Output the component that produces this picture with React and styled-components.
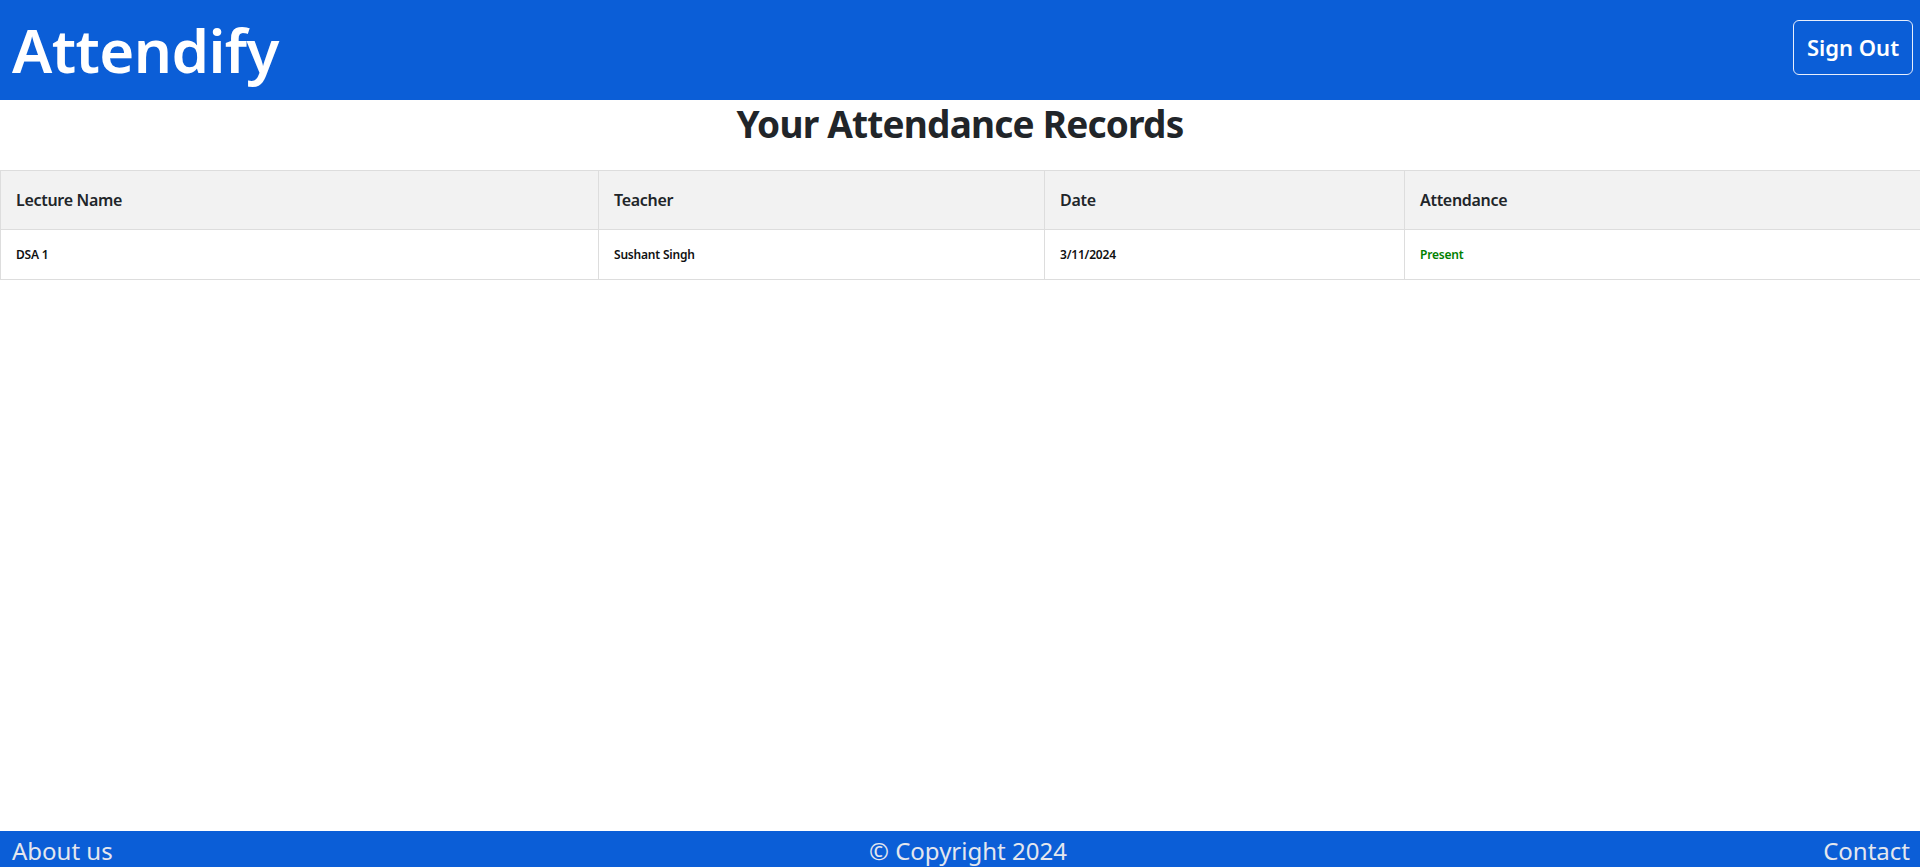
import React from "react";
import styled, { createGlobalStyle } from "styled-components";

const GlobalStyle = createGlobalStyle`
  * { box-sizing: border-box; }
  body {
    margin: 0;
    font-family: "Noto Sans", "Open Sans", sans-serif;
    color: #212529;
    background: #fff;
  }
`;

const Page = styled.div`
  min-height: 100vh;
  display: flex;
  flex-direction: column;
`;

const Header = styled.header`
  height: 100px;
  background: #0b5ed7;
  display: flex;
  align-items: center;
  justify-content: space-between;
  padding: 0 7px 6px 12px;
`;

const Brand = styled.h1`
  margin: 0;
  padding-top: 6px;
  color: #fff;
  font-size: 60px;
  font-weight: 600;
  letter-spacing: -0.6px;
`;

const SignOut = styled.button`
  width: 120px;
  height: 55px;
  background: transparent;
  border: 1px solid #e8eefc;
  border-radius: 6px;
  color: #fff;
  font-family: inherit;
  font-size: 22px;
  font-weight: 600;
  cursor: pointer;
`;

const Main = styled.main`
  flex: 1;
`;

const Heading = styled.h2`
  margin: 0;
  height: 70px;
  padding-top: 3px;
  line-height: 1.15;
  text-align: center;
  font-size: 37px;
  font-weight: 700;
  letter-spacing: -0.8px;
`;

const Table = styled.table`
  width: 100%;
  border-collapse: collapse;
  table-layout: fixed;
`;

const Th = styled.th`
  height: 59px;
  padding: 0 15px;
  background: #f2f2f2;
  border: 1px solid #ddd;
  text-align: left;
  font-size: 16px;
  font-weight: 600;
  letter-spacing: -0.3px;
  width: ${(p) => p.$w}px;
`;

const Td = styled.td`
  height: 50px;
  padding: 0 15px;
  border: 1px solid #ddd;
  font-size: 12px;
  font-weight: 600;
  letter-spacing: -0.2px;
  color: ${(p) => p.$color || "#111"};
`;

const Footer = styled.footer`
  height: 36px;
  background: #0b5ed7;
  display: flex;
  align-items: center;
  justify-content: space-between;
  padding: 0 10px 0 12px;
  color: #e4e7ee;
  font-size: 24px;
  font-weight: 400;
  line-height: 36px;
  overflow: hidden;
`;

const FooterItem = styled.span`
  padding-top: 4px;
`;

const columns = [
  { label: "Lecture Name", w: 598 },
  { label: "Teacher", w: 446 },
  { label: "Date", w: 360 },
  { label: "Attendance", w: 516 },
];

const records = [
  { lecture: "DSA 1", teacher: "Sushant Singh", date: "3/11/2024", status: "Present" },
];

export default function App() {
  return (
    <Page>
      <GlobalStyle />
      <Header>
        <Brand>Attendify</Brand>
        <SignOut>Sign Out</SignOut>
      </Header>
      <Main>
        <Heading>Your Attendance Records</Heading>
        <Table>
          <thead>
            <tr>
              {columns.map((c) => (
                <Th key={c.label} $w={c.w}>
                  {c.label}
                </Th>
              ))}
            </tr>
          </thead>
          <tbody>
            {records.map((r, i) => (
              <tr key={i}>
                <Td>{r.lecture}</Td>
                <Td>{r.teacher}</Td>
                <Td>{r.date}</Td>
                <Td $color={r.status === "Present" ? "#008000" : "#c00"}>{r.status}</Td>
              </tr>
            ))}
          </tbody>
        </Table>
      </Main>
      <Footer>
        <FooterItem>About us</FooterItem>
        <FooterItem>© Copyright 2024</FooterItem>
        <FooterItem>Contact</FooterItem>
      </Footer>
    </Page>
  );
}
